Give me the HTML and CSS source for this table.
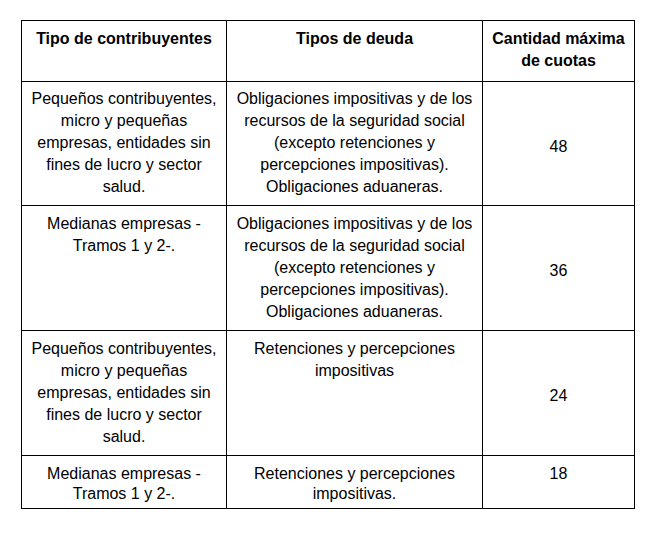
FILE: index.html
```html
<!DOCTYPE html>
<html lang="es">
<head>
<meta charset="utf-8">
<title>Planes de pago</title>
<link rel="stylesheet" href="styles.css">
</head>
<body>
<div class="page">
<table class="plan">
<colgroup>
<col class="c1">
<col class="c2">
<col class="c3">
</colgroup>
<thead>
<tr class="head">
<th>Tipo de contribuyentes</th>
<th>Tipos de deuda</th>
<th>Cantidad máxima<br>de cuotas</th>
</tr>
</thead>
<tbody>
<tr class="first">
<td>Pequeños contribuyentes,<br>micro y pequeñas<br>empresas, entidades sin<br>fines de lucro y sector<br>salud.</td>
<td>Obligaciones impositivas y de los<br>recursos de la seguridad social<br>(excepto retenciones y<br>percepciones impositivas).<br>Obligaciones aduaneras.</td>
<td class="num">48</td>
</tr>
<tr>
<td>Medianas empresas -<br>Tramos 1 y 2-.</td>
<td>Obligaciones impositivas y de los<br>recursos de la seguridad social<br>(excepto retenciones y<br>percepciones impositivas).<br>Obligaciones aduaneras.</td>
<td class="num">36</td>
</tr>
<tr>
<td>Pequeños contribuyentes,<br>micro y pequeñas<br>empresas, entidades sin<br>fines de lucro y sector<br>salud.</td>
<td>Retenciones y percepciones<br>impositivas</td>
<td class="num">24</td>
</tr>
<tr class="last">
<td>Medianas empresas -<br>Tramos 1 y 2-.</td>
<td>Retenciones y percepciones<br>impositivas.</td>
<td class="num top">18</td>
</tr>
</tbody>
</table>
</div>
</body>
</html>
```

FILE: styles.css
```css
html, body {
  margin: 0;
  padding: 0;
  background: #ffffff;
}

.page {
  padding: 20px 0 0 21px;
}

.plan {
  border-collapse: collapse;
  table-layout: fixed;
  width: 613px;
  font-family: "Liberation Sans", Arial, sans-serif;
  font-size: 16px;
  line-height: 22px;
  color: #000000;
}

.c1 { width: 205px; }
.c2 { width: 256px; }
.c3 { width: 152px; }

.plan th,
.plan td {
  border: 1px solid #000000;
  padding: 7px 2px 7px;
  text-align: center;
  vertical-align: top;
  white-space: nowrap;
}

.plan th {
  font-weight: bold;
  padding-bottom: 9px;
}

.plan .first td {
  padding-top: 6px;
}

.plan td.num {
  vertical-align: middle;
  padding-top: 13px;
}

.plan .last td {
  line-height: 20px;
  padding-top: 8px;
  padding-bottom: 4px;
}

.plan .last td.top {
  vertical-align: top;
}
```
